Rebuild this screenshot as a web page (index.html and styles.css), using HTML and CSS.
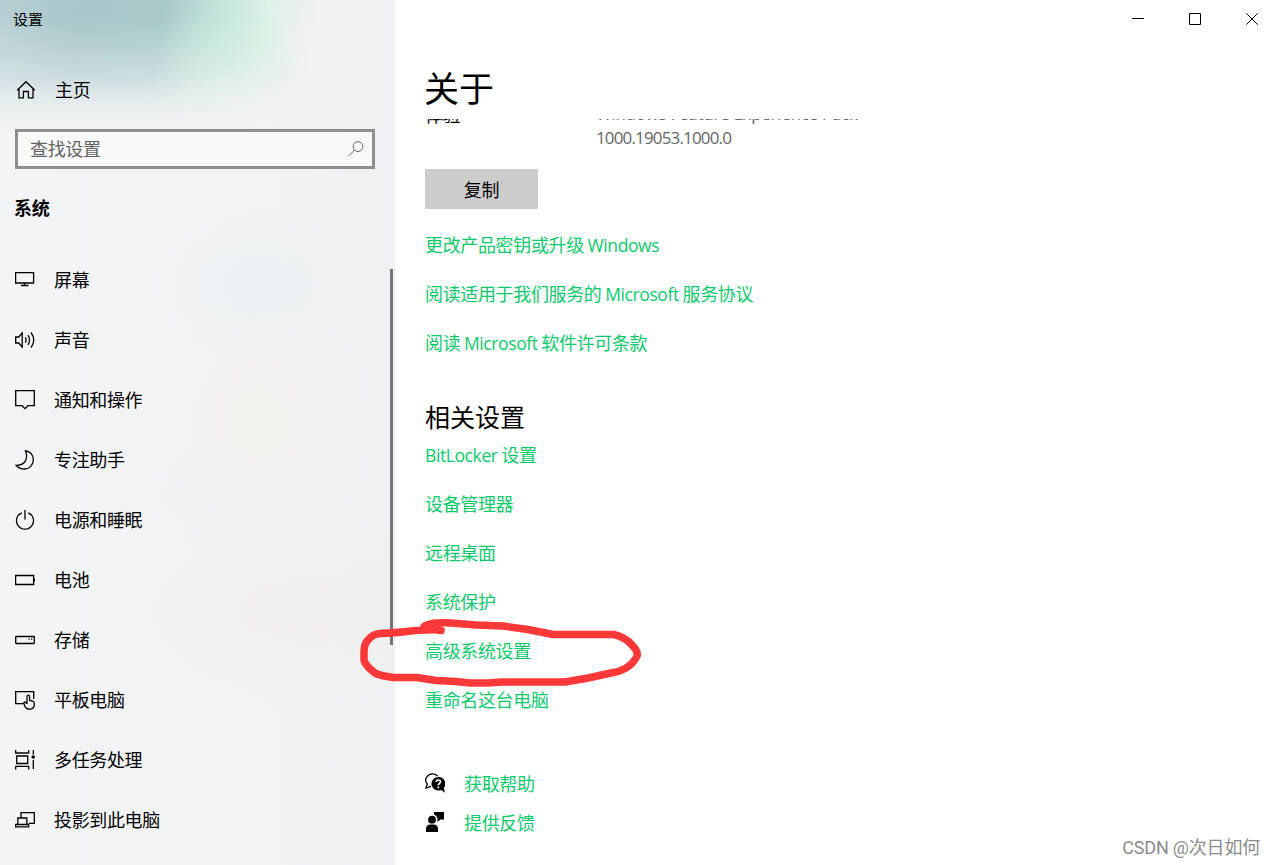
FILE: index.html
```html
<!DOCTYPE html>
<html lang="zh-CN">
<head>
<meta charset="utf-8">
<title>设置</title>
<link rel="stylesheet" href="styles.css">
</head>
<body>
<div class="window">
  <aside class="sidebar">
    <div class="app-title">设置</div>
    <div class="home">
      <svg class="icon" viewBox="0 0 20 20"><path d="M1.2 10.2 10 1.7l8.8 8.5M3 8.8v9.1h4.400v-6.400h5v6.400H17V8.800"/></svg>
      <span>主页</span>
    </div>
    <div class="search">
      <span>查找设置</span>
      <svg class="search-icon" viewBox="0 0 16 16"><circle cx="10" cy="5.600" r="4.900"/><path d="M6.500 9.200.5 15.200"/></svg>
    </div>
    <h2 class="group">系统</h2>
    <nav class="nav">
      <div class="item"><svg class="icon" viewBox="0 0 20 20"><path d="M.6 2.600h18v10.400H.6zM9.500 13v2.500M6 15.500h7.500"/></svg><span>屏幕</span></div>
      <div class="item"><svg class="icon" viewBox="0 0 20 20"><path d="M.7 7h3L7.200 3v14L3.700 13h-3zM10.300 7.400q1.500 2.600 0 5.200M13 5.200q3 4.800 0 9.600M16 2.500q5.500 7.500 0 15"/></svg><span>声音</span></div>
      <div class="item"><svg class="icon" viewBox="0 0 20 20"><path d="M.7.700h18.600v15H13l-3 3-3-3H.7z"/></svg><span>通知和操作</span></div>
      <div class="item"><svg class="icon" viewBox="0 0 20 20"><path d="M10.500.700C16 2 18.500 6 18.300 10.300 18 15.500 14 19 9.500 19c-3.600 0-6.500-1.400-8.300-3.700C8.500 15.500 14 10.500 10.500.700z"/></svg><span>专注助手</span></div>
      <div class="item"><svg class="icon" viewBox="0 0 20 20"><path d="M6.800 2.800A8.500 8.500 0 1 0 13.200 2.800M10 0v9.500"/></svg><span>电源和睡眠</span></div>
      <div class="item"><svg class="icon" viewBox="0 0 20 20"><path d="M.6 5.500h18v9H.6zM19.500 8.500v3"/></svg><span>电池</span></div>
      <div class="item"><svg class="icon" viewBox="0 0 20 20"><rect x=".7" y="6.500" width="18.600" height="7" rx=".8"/><path d="M13.500 9.200h1.300M16 9.200h1.300"/></svg><span>存储</span></div>
      <div class="item"><svg class="icon" viewBox="0 0 20 20"><path d="M8.500 13.700H.7V1.700h18V9M12 14V6.700q0-1.500 1.300-1.500t1.300 1.500v3.800l3 .6q1.700.5 1.700 2.300v1.800q-.5 4-4.700 4-3.600 0-4.900-3.200l-.9-3q.3-1.500 1.800-.7l1.400 1.500"/></svg><span>平板电脑</span></div>
      <div class="item"><svg class="icon" viewBox="0 0 20 20"><path d="M.7 0v3h13V0M1.700 6h11v7.500h-11zM.7 19.500v-3.200h13v3.200M18.300 0v4.500M18.300 10v9"/><circle class="solid" cx="18.200" cy="7" r="1.800"/></svg><span>多任务处理</span></div>
      <div class="item"><svg class="icon" viewBox="0 0 20 20"><path d="M6 7.800V2.700h13.300v10.600h-5.500M2.800 14.500V8h9v6.500M.7 14.500h13v2.300H.7z"/></svg><span>投影到此电脑</span></div>
    </nav>
    <div class="scrollbar"></div>
  </aside>

  <main class="main">
    <div class="caption">
      <svg viewBox="0 0 12 12"><path d="M0 5.500h12"/></svg>
      <svg viewBox="0 0 12 12"><path d="M.5.500h11v11H.5z"/></svg>
      <svg viewBox="0 0 12 12"><path d="m.3.300 11.400 11.400m0-11.400L.3 11.700"/></svg>
    </div>
    <h1 class="title">关于</h1>
    <div class="scroll-area">
      <div class="spec">
        <span class="spec-name">体验</span>
        <span class="spec-value"><span class="pack">Windows Feature Experience Pack</span><br><span class="version">1000.19053.1000.0</span></span>
      </div>
      <button class="copy">复制</button>
      <div class="links">
        <a>更改产品密钥或升级 <span class="latin">Windows</span></a>
        <a>阅读适用于我们服务的 <span class="latin">Microsoft</span> 服务协议</a>
        <a>阅读 <span class="latin">Microsoft</span> 软件许可条款</a>
      </div>
      <h2 class="related">相关设置</h2>
      <div class="links">
        <a><span class="latin">BitLocker</span> 设置</a>
        <a>设备管理器</a>
        <a>远程桌面</a>
        <a>系统保护</a>
        <a>高级系统设置</a>
        <a>重命名这台电脑</a>
      </div>
      <div class="support">
        <a><svg class="icon" viewBox="0 0 20 20"><path d="M6 13.300 1 15l1.300-4C.5 9 .3 6 1.900 3.800 4.500-.1 10.500-.1 12.700 3.200"/><path class="solid" d="M13.200 4a6.800 6.800 0 0 0 0 13.600c1 0 2-.2 3-.7l3.800 2.800-1.200-4.700A6.700 6.700 0 0 0 13.200 4z"/><path class="mark" d="M11.200 9q.2-2 2.200-2t2.100 1.800c0 1.600-2.200 1.600-2.200 3.500M13.300 13.600v1.700"/></svg><span>获取帮助</span></a>
        <a><svg class="icon" viewBox="0 0 20 20"><g class="solid"><circle cx="7" cy="7.700" r="3.900"/><path d="M1 20v-3q0-4.500 4.500-4.500h3Q13 12.500 13 17v3zM9 0h10v7.500h-3.600L12.500 10V6.500Q12 3.300 9 2.500z"/></g></svg><span>提供反馈</span></a>
      </div>
    </div>
  </main>

  <svg class="annotation" viewBox="0 0 290 70"><path d="M83 11.500C75 9.500 66 12 57 11.500 48 13 32 14 22 14.500 14 15 12 19 9 22 6 26 6 29 6 33v8c1 5 6 9 11 13 5 3 11 3 18 4.500h24l19 3 20 1 14 1.500h18l14-1h63l23-4 23-5c13-2 21-8 25-15 3-4 0-9-4-13-5-6-12-9-18-10.500h-61l-25-5-25-3.500-27-1-25-2Q66 3 65 9.500"/></svg>
  <div class="watermark">CSDN @次日如何</div>
</div>
</body>
</html>
```

FILE: styles.css
```css
* { box-sizing: border-box; }

body {
  margin: 0;
  background: #fff;
  color: #000;
  font: 18px/24px "Noto Sans CJK SC", sans-serif;
  letter-spacing: -0.35px;
}

h1, h2 { margin: 0; font-weight: 400; }

.window {
  position: relative;
  display: flex;
  width: 1275px;
  height: 865px;
  overflow: hidden;
}

.sidebar {
  position: relative;
  z-index: 0;
  flex: 0 0 395px;
  display: flex;
  flex-direction: column;
  background:
    radial-gradient(ellipse 110px 80px at 255px 285px, #ebf0f3, #ebf0f300),
    radial-gradient(ellipse 110px 130px at 260px 425px, #f3f1ed, #f3f1ed00),
    radial-gradient(ellipse 110px 60px at 240px 495px, #ecf1f3, #ecf1f300),
    radial-gradient(ellipse 190px 100px at 290px 610px, #f0efed, #f0efed00),
    linear-gradient(90deg, #f2f4f5, #f2f3f3 60%, #eff0f1);
}

/* Wallpaper colour showing through the acrylic at the top */
.sidebar::before {
  content: "";
  position: absolute;
  z-index: -1;
  inset: 0 0 auto;
  height: 125px;
  background:
    radial-gradient(ellipse 75px 60px at 225px 60px, #c3ead380, #d0eddf00),
    linear-gradient(97deg, #b7d0d5 0, #a9c6ca 80px, #a9cacc 165px, #c7e6dc 225px, #dcf1e6 265px, #eff2f200 315px);
  -webkit-mask-image: linear-gradient(#000 20px, #000c 48px, #0008 75px, #0003 100px, #0000 125px);
  mask-image: linear-gradient(#000 20px, #000c 48px, #0008 75px, #0003 100px, #0000 125px);
}

.app-title {
  padding: 7px 0 0 13px;
  font-size: 15px;
  letter-spacing: 0;
}

.home {
  display: flex;
  align-items: center;
  gap: 19px;
  height: 24px;
  margin: 47px 0 0 16px;
}

.home span, .search span, .item span { padding-bottom: 2px; }

.icon {
  flex: none;
  width: 20px;
  height: 20px;
  fill: none;
  stroke: #000;
  stroke-width: 1.3;
}

.icon .solid { fill: #000; stroke: none; }
.icon .mark { stroke: #fff; stroke-width: 1.7; }

.search {
  display: flex;
  align-items: center;
  justify-content: space-between;
  width: 360px;
  height: 40px;
  margin: 27px 0 0 15px;
  padding: 0 8px 0 12px;
  border: 3px solid #8f8f8f;
  background: #f9f9f9;
  color: #636363;
}

.search-icon {
  width: 16px;
  height: 16px;
  fill: none;
  stroke: #666;
}

.group {
  margin: 26px 0 0 14px;
  font-size: 18px;
  line-height: 24px;
  font-weight: 700;
}

.nav { margin: 31px 0 0 15px; }

.item {
  display: flex;
  align-items: center;
  gap: 19px;
  height: 60px;
}

.scrollbar {
  position: absolute;
  left: 390px;
  top: 269px;
  width: 2.500px;
  height: 376px;
  background: #767676;
}

.main {
  flex: 1;
  display: flex;
  flex-direction: column;
  padding-left: 30px;
}

.caption {
  display: flex;
  justify-content: flex-end;
  gap: 45px;
  height: 39px;
  padding: 13px 17px 0 0;
}

.caption svg {
  width: 12px;
  height: 12px;
  fill: none;
  stroke: #000;
}

.title {
  height: 80px;
  margin-left: -1px;
  padding-top: 24px;
  font-size: 35px;
  line-height: 48px;
  letter-spacing: 0;
}

.scroll-area {
  flex: 1;
  overflow: hidden;
}

.spec {
  display: flex;
  margin-top: -17px;
  height: 67px;
}

.spec-name { width: 171px; }

.spec-value {
  color: #666;
  font-family: "Open Sans", "Noto Sans", sans-serif;
  font-size: 17px;
}

.pack { letter-spacing: -0.28px; }
.version { letter-spacing: -0.85px; }

.copy {
  display: block;
  width: 113px;
  height: 40px;
  padding: 0;
  border: 0;
  background: #ccc;
  color: #000;
  font: inherit;
  letter-spacing: inherit;
}

.links {
  display: flex;
  flex-direction: column;
  gap: 25px;
  color: #0cca6b;
}

.links a { height: 24px; }

.copy + .links { margin-top: 23px; }

.latin {
  font-family: "Open Sans", "Noto Sans", sans-serif;
  font-size: 17.500px;
  line-height: 1;
  letter-spacing: -0.4px;
}

.related {
  margin-top: 44px;
  font-size: 25px;
  line-height: 36px;
  letter-spacing: 0;
}

.related + .links { margin-top: 8px; }

.support {
  display: flex;
  flex-direction: column;
  gap: 15px;
  margin-top: 60px;
  color: #0cca6b;
}

.support a {
  display: flex;
  align-items: center;
  gap: 19px;
  height: 24px;
}

.annotation {
  position: absolute;
  left: 358px;
  top: 619px;
  width: 290px;
  height: 70px;
  fill: none;
  stroke: #fc3838;
  stroke-width: 7.500;
  stroke-linecap: round;
  stroke-linejoin: round;
}

.watermark {
  position: absolute;
  right: 15px;
  bottom: 5px;
  color: #8c8c8c;
  font-family: Roboto, "Noto Sans CJK SC", sans-serif;
  font-size: 18px;
  letter-spacing: -0.2px;
}
```
